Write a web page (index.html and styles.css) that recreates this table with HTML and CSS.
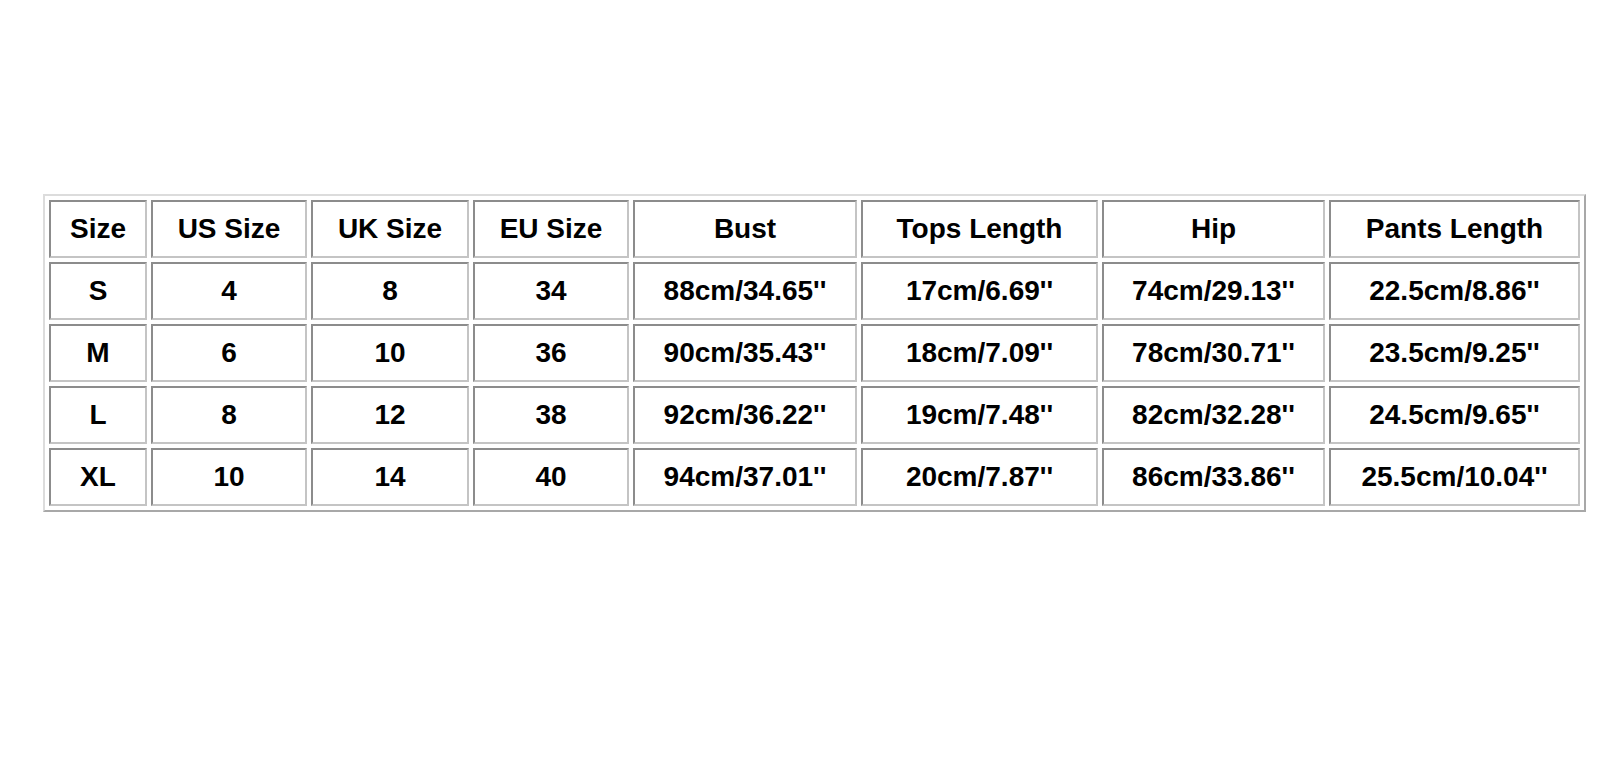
FILE: index.html
```html
<!DOCTYPE html>
<html lang="en">
<head>
<meta charset="utf-8">
<title>Size Chart</title>
<link rel="stylesheet" href="styles.css">
</head>
<body>
<div class="page">
  <table class="chart">
    <thead>
      <tr class="row">
        <th class="c1">Size</th>
        <th class="c2">US Size</th>
        <th class="c3">UK Size</th>
        <th class="c4">EU Size</th>
        <th class="c5">Bust</th>
        <th class="c6">Tops Length</th>
        <th class="c7">Hip</th>
        <th class="c8">Pants Length</th>
      </tr>
    </thead>
    <tbody>
      <tr class="row">
        <td>S</td><td>4</td><td>8</td><td>34</td><td>88cm/34.65''</td><td>17cm/6.69''</td><td>74cm/29.13''</td><td>22.5cm/8.86''</td>
      </tr>
      <tr class="row">
        <td>M</td><td>6</td><td>10</td><td>36</td><td>90cm/35.43''</td><td>18cm/7.09''</td><td>78cm/30.71''</td><td>23.5cm/9.25''</td>
      </tr>
      <tr class="row">
        <td>L</td><td>8</td><td>12</td><td>38</td><td>92cm/36.22''</td><td>19cm/7.48''</td><td>82cm/32.28''</td><td>24.5cm/9.65''</td>
      </tr>
      <tr class="row">
        <td>XL</td><td>10</td><td>14</td><td>40</td><td>94cm/37.01''</td><td>20cm/7.87''</td><td>86cm/33.86''</td><td>25.5cm/10.04''</td>
      </tr>
    </tbody>
  </table>
</div>
</body>
</html>
```
FILE: styles.css
```css
html, body {
  margin: 0;
  padding: 0;
  background: #ffffff;
}

.page {
  padding: 194px 0 0 43px;
}

.chart {
  width: 1543px;
  table-layout: fixed;
  border-collapse: separate;
  border-spacing: 4px;
  border-style: solid;
  border-width: 2px;
  border-color: #dcdcdc #a8a8a8 #a8a8a8 #dcdcdc;
  font-family: "Liberation Sans", Arial, sans-serif;
  font-weight: bold;
  font-size: 28px;
  color: #000000;
}

.row {
  height: 58px;
}

.chart th,
.chart td {
  box-sizing: border-box;
  padding: 0;
  text-align: center;
  vertical-align: middle;
  font-weight: bold;
  border-style: solid;
  border-width: 2px;
  border-color: #8c8c8c #c4c4c4 #c4c4c4 #8c8c8c;
  white-space: nowrap;
}

.c1 { width: 98px; }
.c2 { width: 156px; }
.c3 { width: 158px; }
.c4 { width: 156px; }
.c5 { width: 224px; }
.c6 { width: 237px; }
.c7 { width: 223px; }
.c8 { width: 251px; }
```
